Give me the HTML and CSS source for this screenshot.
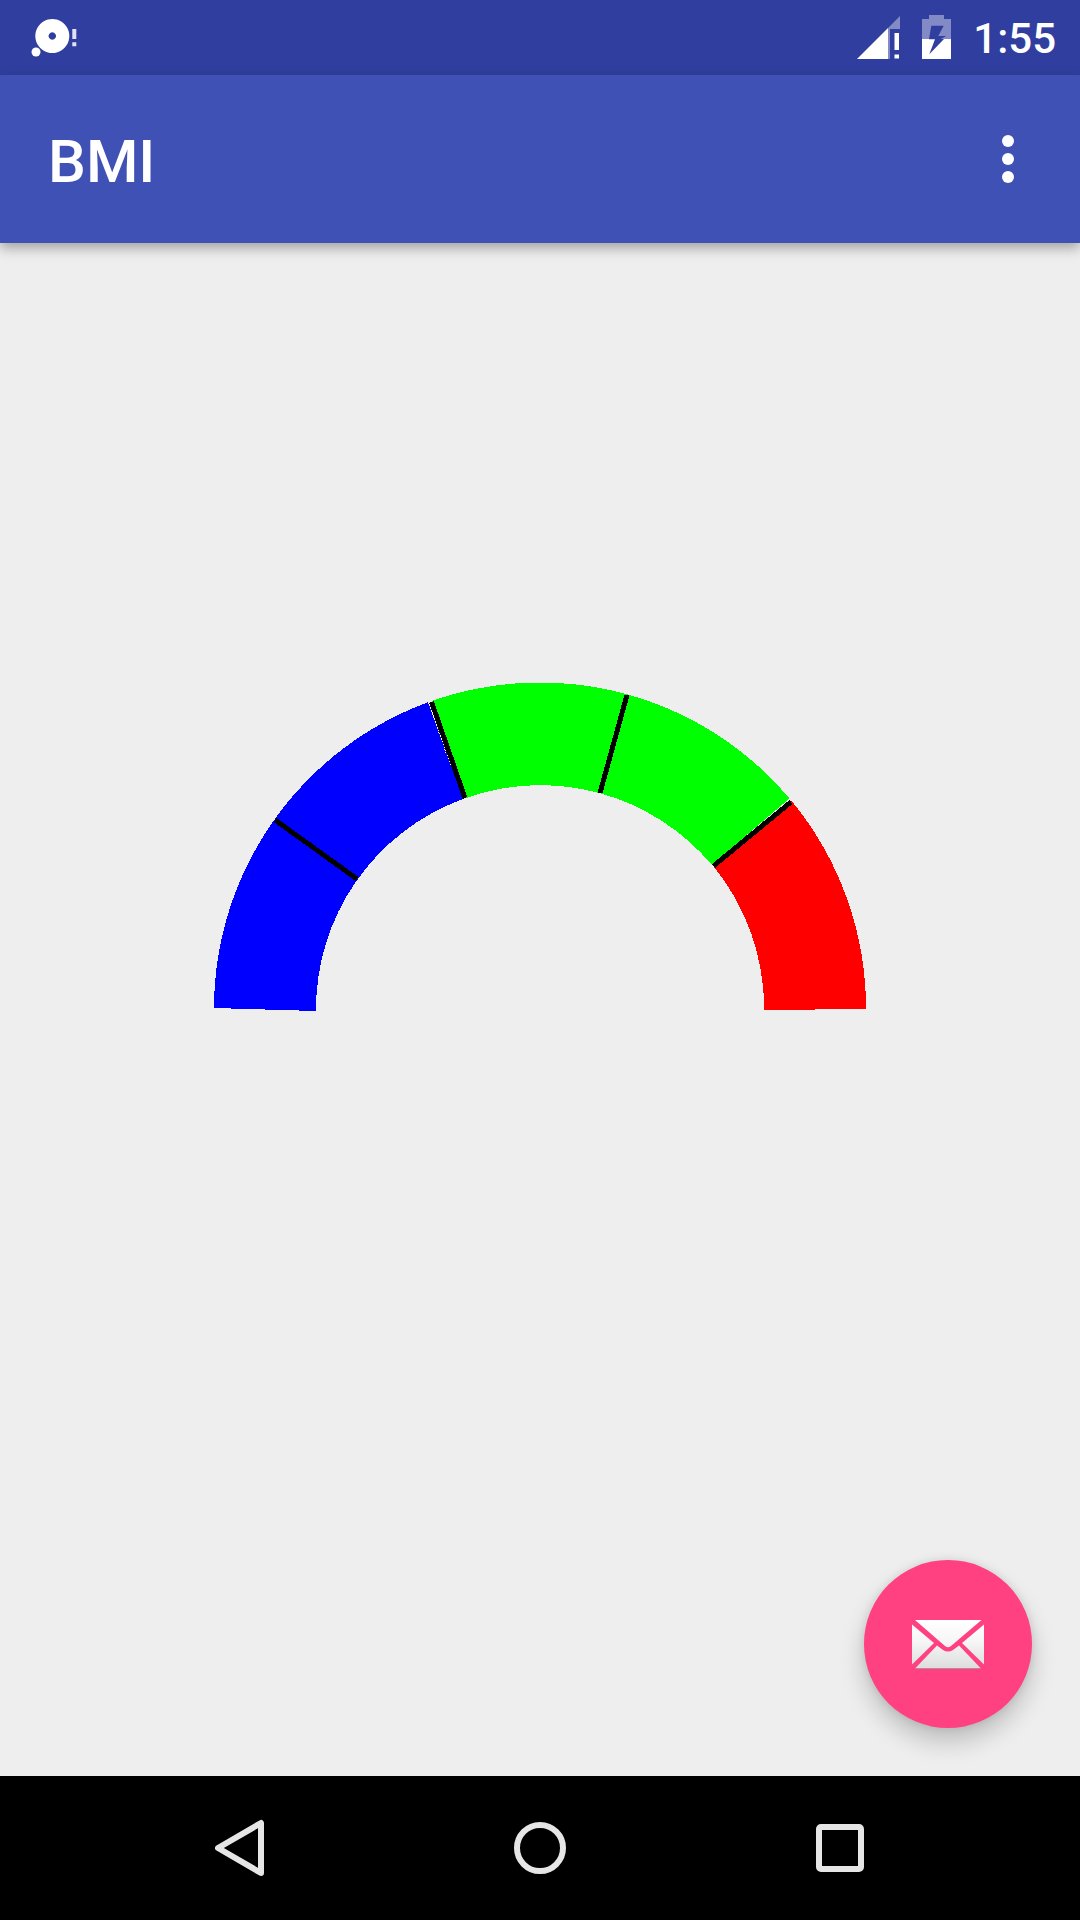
FILE: index.html
```html
<!DOCTYPE html>
<html lang="en">
<head>
<meta charset="utf-8">
<meta name="viewport" content="width=device-width, initial-scale=1">
<title>BMI</title>
<link rel="stylesheet" href="styles.css">
</head>
<body>
<div class="status-bar">
  <svg class="notice" width="54" height="44" viewBox="0 0 54 44" fill="#fff" aria-hidden="true">
    <path fill-rule="evenodd" d="M28.300 4a17 17 0 1 0 0.010 0zM28.300 17.300a3.700 3.700 0 1 1 -0.010 0z"/>
    <circle cx="12" cy="37" r="4.500"/>
    <path opacity=".85" d="M48.300 14h4v10h-4zM48.300 27.300h4v4h-4z"/>
  </svg>
  <div class="status-right">
    <svg width="44" height="44" viewBox="0 0 44 44" fill="#fff" aria-hidden="true">
      <path d="M1 44L32 13v31z"/>
      <path opacity=".4" d="M32 13L44 1v13H34v30h-2z"/>
      <path d="M38.500 18h4.500v17h-4.500zM38.500 39.500h4.500V43.500h-4.500z"/>
    </svg>
    <svg width="29" height="44" viewBox="0 0 29 44" fill="#fff" fill-rule="evenodd" aria-hidden="true">
      <path opacity=".4" d="M7 0h15v4h7v20H18.700L24.300 21h-8l5.400-10.300H9.300L7 24H0V4h7z"/>
      <path d="M0 24h7v.300h6L7.300 39.300L22 24h7v20H0z"/>
    </svg>
    <time class="clock">1:55</time>
  </div>
</div>
<header class="toolbar">
  <h1 class="title">BMI</h1>
  <button class="menu" type="button" aria-label="More options">
    <svg width="12" height="48" viewBox="0 0 12 48" fill="#fff"><circle cx="6" cy="6" r="6"/><circle cx="6" cy="24" r="6"/><circle cx="6" cy="42" r="6"/></svg>
  </button>
</header>
<main class="content">
  <svg class="gauge" viewBox="-326 -326 652 653" role="img" aria-label="BMI gauge" shape-rendering="crispEdges">
    <path fill="#00f" d="M-326 -1A326.500 326.500 0 0 1 -112 -306.700L-77 -210A224 224 0 0 0 -224 2z"/>
    <path fill="#0f0" d="M-108 -308.100A326.500 326.500 0 0 1 249.500 -210.600L172 -144A224 224 0 0 0 -74 -211z"/>
    <path fill="#f00" d="M251 -208.800A326.500 326.500 0 0 1 326 0L224 1A224 224 0 0 0 174 -142z"/>
    <g stroke="#fff" stroke-dasharray="1 2"><path d="M-111 -305L-91 -248"/></g>
    <g stroke="#000" stroke-width="5"><path d="M-265 -189L-183 -130M-108.500 -307L-75 -211M87 -314L60 -216M251 -207L173.500 -143"/></g>
  </svg>
  <button class="fab" type="button" aria-label="Send mail">
    <svg width="72" height="50" viewBox="0 0 72 50">
      <defs><linearGradient id="paper" x1="0" y1="0" x2="0" y2="50" gradientUnits="userSpaceOnUse"><stop offset="0" stop-color="#fff"/><stop offset=".4" stop-color="#f7f7f7"/><stop offset="1" stop-color="#dcdcdc"/></linearGradient></defs>
      <g fill="url(#paper)">
        <path d="M3 0H69.500L39 26Q36 28.500 33 26z"/>
        <path d="M0 4.500L22 23L0 44.500z"/>
        <path d="M72 4.500L50 23L72 44.500z"/>
        <path d="M25 25.500L31 30Q36 33 41 30L47 25.500L68.500 48L67 49H5L3.500 48z"/>
      </g>
      <path d="M4 48.500H68" stroke="#b58b99"/>
    </svg>
  </button>
</main>
<nav class="nav-bar">
  <button type="button" aria-label="Back"><svg class="nav-icon" viewBox="-30 -30 60 60"><path d="M-22 0L21 -25V25z"/></svg></button>
  <button type="button" aria-label="Home"><svg class="nav-icon" viewBox="-30 -30 60 60"><circle r="23"/></svg></button>
  <button type="button" aria-label="Recent apps"><svg class="nav-icon" viewBox="-30 -30 60 60"><rect x="-21" y="-21" width="42" height="42" rx="2"/></svg></button>
</nav>
</body>
</html>
```
FILE: styles.css
```css
* { box-sizing: border-box; }

body {
  margin: 0;
  min-height: 100vh;
  display: flex;
  flex-direction: column;
  background: #eee;
  color: #fff;
  font-family: Roboto, "Noto Sans", sans-serif;
  font-weight: 500;
}

button {
  display: flex;
  align-items: center;
  justify-content: center;
  margin: 0;
  padding: 0;
  border: 0;
  background: none;
}

svg { display: block; }

.status-bar {
  height: 75px;
  padding: 0 24px;
  display: flex;
  align-items: flex-start;
  justify-content: space-between;
  background: #303f9f;
}

.notice { margin-top: 15px; }

.status-right {
  height: 74px;
  display: flex;
  align-items: center;
  gap: 22px;
}

.clock {
  padding-top: 4px;
  font-size: 42px;
  line-height: 48px;
}

.toolbar {
  position: relative;
  z-index: 1;
  height: 168px;
  padding: 0 48px;
  display: flex;
  align-items: center;
  justify-content: space-between;
  background: #3f51b5;
  box-shadow: 0 5px 12px rgba(0, 0, 0, .32);
}

.title {
  margin: 0;
  padding-top: 6px;
  font-size: 60px;
  font-weight: 500;
  line-height: 72px;
}

.menu {
  width: 48px;
  height: 96px;
}

.content {
  position: relative;
  flex: 1;
  display: flex;
  align-items: center;
  justify-content: center;
}

.gauge {
  width: 652px;
  max-width: 100%;
  overflow: visible;
}

.fab {
  position: absolute;
  right: 48px;
  bottom: 48px;
  width: 168px;
  height: 168px;
  padding-top: 2px;
  border-radius: 50%;
  background: #ff4081;
  box-shadow: 0 14px 24px rgba(0, 0, 0, .2), 0 0 8px rgba(0, 0, 0, .1);
}

.nav-bar {
  height: 144px;
  padding: 0 90px;
  display: grid;
  grid-template-columns: repeat(3, 1fr);
  background: #000;
}

.nav-icon {
  width: 60px;
  height: 60px;
  fill: none;
  stroke: #e6e6e6;
  stroke-width: 6;
  stroke-linejoin: round;
}
```
